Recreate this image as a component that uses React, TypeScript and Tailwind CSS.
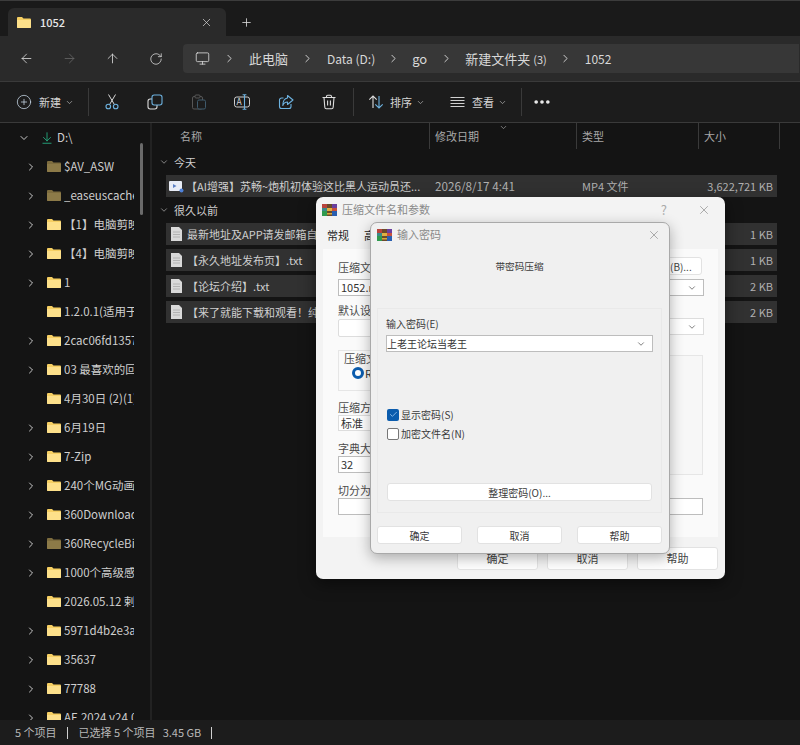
import React from "react";
import { ArrowLeft, ArrowRight, ArrowUp, RotateCw, Monitor, ChevronRight, ChevronDown, Plus, X, MoreHorizontal, Check, ArrowDownToLine, CirclePlus } from "lucide-react";

const F = "font-['Noto_Sans_CJK_SC','Noto_Sans',sans-serif]";

function Folder({ dim = false }: { dim?: boolean }) {
  return (
    <svg width="14" height="13" viewBox="0 0 14 13" className="shrink-0">
      <path d="M0 2 a1 1 0 0 1 1-1 h4 l1.5 1.5 H13 a1 1 0 0 1 1 1 V11 a1 1 0 0 1-1 1 H1 a1 1 0 0 1-1-1 Z" fill={dim ? "#7d6c3e" : "#f6cf62"} />
      <path d="M0 4 h14 V11 a1 1 0 0 1-1 1 H1 a1 1 0 0 1-1-1 Z" fill={dim ? "#8c7a48" : "#fde08a"} />
    </svg>
  );
}

function FileIcon() {
  return (
    <svg width="11" height="14" viewBox="0 0 11 14" className="shrink-0">
      <path d="M0 0 H8 L11 3 V14 H0 Z" fill="#d9d9d9" />
      <path d="M2 5 H9 M2 7.5 H9 M2 10 H9" stroke="#a8a8a8" strokeWidth="0.8" />
    </svg>
  );
}

function VideoIcon() {
  return (
    <svg width="15" height="13" viewBox="0 0 15 13" className="shrink-0">
      <rect x="0" y="1" width="13" height="10" rx="1" fill="#e8ecf6" />
      <path d="M4 4 L7.5 6 L4 8 Z" fill="#5b7fc4" />
      <circle cx="12.5" cy="10.5" r="2" fill="#4f82d9" />
    </svg>
  );
}

function RarIcon() {
  return (
    <svg width="15" height="14" viewBox="0 0 15 14" className="shrink-0">
      <rect x="0" y="1" width="15" height="12" fill="#6b4a2a" />
      <rect x="0" y="1" width="5" height="4" fill="#b8443c" />
      <rect x="10" y="1" width="5" height="4" fill="#6a3f9e" />
      <rect x="0" y="5" width="5" height="3" fill="#3b8a8a" />
      <rect x="10" y="5" width="5" height="3" fill="#c8503c" />
      <rect x="0" y="8" width="5" height="5" fill="#2f9a4e" />
      <rect x="10" y="8" width="5" height="5" fill="#2a5fb0" />
      <rect x="5" y="5" width="5" height="3" fill="#e0b040" />
      <rect x="5" y="10" width="5" height="1.5" fill="#d9a93a" />
    </svg>
  );
}

const Blue = "#6db2e0";

function ScissorsIcon() {
  return (
    <svg width="16" height="16" viewBox="0 0 16 16" fill="none" className="shrink-0">
      <path d="M4.5 0.5 L10.2 10.2 M11.5 0.5 L5.8 10.2" stroke="#d8d8d8" strokeWidth="1" />
      <circle cx="4.3" cy="12.5" r="2.3" stroke={Blue} strokeWidth="1.1" />
      <circle cx="11.7" cy="12.5" r="2.3" stroke={Blue} strokeWidth="1.1" />
    </svg>
  );
}
function CopyIcon() {
  return (
    <svg width="16" height="16" viewBox="0 0 16 16" fill="none" className="shrink-0">
      <rect x="1" y="5" width="9" height="10" rx="2.2" stroke="#dcdcdc" strokeWidth="1.1" />
      <rect x="5" y="1" width="10" height="10" rx="2.2" fill="#1c1c1c" stroke={Blue} strokeWidth="1.1" />
    </svg>
  );
}
function PasteIcon() {
  return (
    <svg width="16" height="16" viewBox="0 0 16 16" fill="none" className="shrink-0">
      <rect x="1.5" y="2.5" width="10" height="12.5" rx="1.5" stroke="#565656" />
      <rect x="4" y="1" width="5" height="3" rx="1" fill="#1c1c1c" stroke="#565656" />
      <rect x="6.5" y="6" width="8" height="9" rx="1.5" fill="#1c1c1c" stroke="#3f5a6c" />
    </svg>
  );
}
function RenameIcon() {
  return (
    <svg width="16" height="16" viewBox="0 0 16 16" fill="none" className="shrink-0">
      <rect x="0.5" y="3" width="15" height="10" rx="2.2" stroke="#cfcfcf" strokeWidth="1" />
      <text x="2.5" y="11" fontSize="8.5" fill="#d8d8d8">A</text>
      <path d="M10.5 0.8 V15.2 M8.6 0.8 H12.4 M8.6 15.2 H12.4" stroke={Blue} strokeWidth="1.1" />
    </svg>
  );
}
function ShareIcon() {
  return (
    <svg width="16" height="16" viewBox="0 0 16 16" fill="none" className="shrink-0">
      <path d="M13 10 V12.5 a2 2 0 0 1-2 2 H3.5 a2 2 0 0 1-2-2 V6 a2 2 0 0 1 2-2 H5.5" stroke={Blue} strokeWidth="1.1" />
      <path d="M9.5 1.5 L15 6 L9.5 10.5 V8 C7 8 5.5 9.5 4.8 11.5 C4.8 7.5 6.5 4.5 9.5 4 Z" fill="#1c1c1c" stroke={Blue} strokeWidth="1.1" strokeLinejoin="round" />
    </svg>
  );
}
function TrashIcon() {
  return (
    <svg width="16" height="16" viewBox="0 0 16 16" fill="none" className="shrink-0">
      <path d="M1.5 3.5 H14.5 M5.5 3.5 V2.5 a1.2 1.2 0 0 1 1.2-1.2 h2.6 a1.2 1.2 0 0 1 1.2 1.2 V3.5 M3 3.5 L3.8 13.2 a1.6 1.6 0 0 0 1.6 1.5 h5.2 a1.6 1.6 0 0 0 1.6-1.5 L13 3.5 M6.6 6.5 V11.5 M9.4 6.5 V11.5" stroke="#dddddd" strokeWidth="1.1" />
    </svg>
  );
}
function SortIcon() {
  return (
    <svg width="16" height="16" viewBox="0 0 16 16" fill="none" className="shrink-0">
      <path d="M5 14 V2 M1.3 5.7 L5 2 L8.7 5.7" stroke="#dcdcdc" strokeWidth="1.1" />
      <path d="M11 2 V14 M7.3 10.3 L11 14 L14.7 10.3" stroke={Blue} strokeWidth="1.1" />
    </svg>
  );
}
function ViewIcon() {
  return (
    <svg width="15" height="12" viewBox="0 0 15 12" fill="none" className="shrink-0">
      <path d="M0.5 1.5 H14.5 M0.5 4.5 H14.5 M0.5 7.5 H14.5 M0.5 10.5 H14.5" stroke="#d0d0d0" strokeWidth="1" />
    </svg>
  );
}

const tree: [string, boolean, boolean][] = [
  ["$AV_ASW", true, true],
  ["_easeuscache", true, true],
  ["【1】电脑剪映专业版", false, true],
  ["【4】电脑剪映专业版", false, true],
  ["1", false, true],
  ["1.2.0.1(适用于电脑", false, false],
  ["2cac06fd1357abcdef", false, true],
  ["03 最喜欢的回忆集合", false, true],
  ["4月30日 (2)(1)文件", false, false],
  ["6月19日", false, true],
  ["7-Zip", false, true],
  ["240个MG动画素材", false, true],
  ["360Downloads", false, true],
  ["360RecycleBin", true, true],
  ["1000个高级感素材", false, true],
  ["2026.05.12 剌激文件", false, false],
  ["5971d4b2e3a8bcdef", false, true],
  ["35637", false, true],
  ["77788", false, true],
  ["AE.2024 v24.0.0", false, true],
];

const oldFiles: [string, string][] = [
  ["最新地址及APP请发邮箱自动获取.txt", "1 KB"],
  ["【永久地址发布页】.txt", "1 KB"],
  ["【论坛介绍】.txt", "2 KB"],
  ["【来了就能下载和观看！纯净无广告】.txt", "2 KB"],
];

function Sep() {
  return <ChevronRight size={13} strokeWidth={1.8} className="text-[#d0d0d0] shrink-0" />;
}

function Btn({ children, className = "" }: { children: React.ReactNode; className?: string }) {
  return (
    <div className={`flex h-[18px] items-center justify-center rounded-[3px] border border-[#e2e2e2] bg-white text-[10px] text-[#3a3a3a] ${className}`}>
      {children}
    </div>
  );
}

function Select({ children, className = "" }: { children?: React.ReactNode; className?: string }) {
  return (
    <div className={`flex h-[17px] items-center justify-between border border-[#bdbdbd] bg-white pl-0 pr-[6px] text-[10px] text-[#333] ${className}`}>
      <span>{children}</span>
      <ChevronDown size={10} className="text-[#666]" />
    </div>
  );
}

function Label({ children }: { children: React.ReactNode }) {
  return <div className="text-[11px] leading-[15px] text-[#4a4a4a] whitespace-nowrap">{children}</div>;
}

export default function App() {
  return (
    <div className={`${F} relative flex h-[745px] w-[800px] flex-col overflow-hidden bg-[#141414] text-[#cfcfcf]`}>
      {/* Tab bar */}
      <div className="flex h-[36px] shrink-0 items-end border-t border-[#3c3c3c] bg-[#1a1a1a] pl-[8px]">
        <div className="flex h-[28px] w-[218px] items-center rounded-t-[6px] bg-[#2a2a2a] pl-[9px] pr-[12px]">
          <Folder />
          <span className="ml-[9px] text-[11px] font-medium text-[#e6e6e6]">1052</span>
          <X size={13} strokeWidth={1.3} className="ml-auto mr-[1px] text-[#d8d8d8]" />
        </div>
        <Plus size={13} strokeWidth={1.5} className="mb-[7px] ml-[14px] text-[#dddddd]" />
      </div>
      {/* Address row */}
      <div className="flex h-[45px] shrink-0 items-center bg-[#2a2a2a] pl-[19px]">
        <ArrowLeft size={15} strokeWidth={1.3} className="text-[#dcdcdc]" />
        <ArrowRight size={15} strokeWidth={1.3} className="ml-[28px] text-[#666]" />
        <ArrowUp size={15} strokeWidth={1.3} className="ml-[28px] text-[#dcdcdc]" />
        <RotateCw size={14} strokeWidth={1.3} className="ml-[29px] text-[#dcdcdc]" />
        <div className="ml-[20px] flex h-[29px] w-[616px] items-center gap-[13px] rounded-l-[4px] bg-[#373737] pl-[12px] text-[13px] text-[#d8d8d8] whitespace-nowrap">
          <Monitor size={15} strokeWidth={1.3} className="text-[#dcdcdc]" />
          <Sep />
          <span>此电脑</span>
          <Sep />
          <span className="text-[12px]">Data (D:)</span>
          <span className="ml-[-1px]"><Sep /></span>
          <span className="ml-[-1px]">go</span>
          <Sep />
          <span className="ml-[-1px]">新建文件夹 <span className="text-[11px]">(3)</span></span>
          <span className="ml-[-1px]"><Sep /></span>
          <span className="text-[12px]">1052</span>
        </div>
      </div>
      {/* Toolbar */}
      <div className="flex h-[42px] shrink-0 items-center border-y border-[#3a3a3a] bg-[#1c1c1c] pl-[16px] text-[11px] text-[#d5d5d5]">
        <CirclePlus size={16} strokeWidth={1.1} className="text-[#cfe0f0]" />
        <span className="ml-[7px]">新建</span>
        <ChevronDown size={9} className="ml-[4px] text-[#aaa]" />
        <div className="ml-[14px] h-[28px] w-px bg-[#3a3a3a]" />
        <span className="ml-[15px]"><ScissorsIcon /></span>
        <span className="ml-[27px]"><CopyIcon /></span>
        <span className="ml-[28px]"><PasteIcon /></span>
        <span className="ml-[27px]"><RenameIcon /></span>
        <span className="ml-[28px]"><ShareIcon /></span>
        <span className="ml-[27px]"><TrashIcon /></span>
        <div className="ml-[16px] h-[28px] w-px bg-[#3a3a3a]" />
        <span className="ml-[14px]"><SortIcon /></span>
        <span className="ml-[6px]">排序</span>
        <ChevronDown size={9} className="ml-[4px] text-[#aaa]" />
        <span className="ml-[25px]"><ViewIcon /></span>
        <span className="ml-[7px]">查看</span>
        <ChevronDown size={9} className="ml-[4px] text-[#aaa]" />
        <div className="ml-[14px] h-[28px] w-px bg-[#3a3a3a]" />
        <MoreHorizontal size={20} strokeWidth={2.4} className="ml-[10px] text-[#eeeeee]" />
      </div>
      {/* Main */}
      <div className="flex min-h-0 flex-1">
        <div className="relative w-[152px] shrink-0 overflow-hidden border-r-2 border-[#222]">
          <div className="flex h-[29px] items-center pl-[18px]">
            <ChevronDown size={12} strokeWidth={1.8} className="text-[#dcdcdc]" />
            <ArrowDownToLine size={14} strokeWidth={1.4} className="ml-[10px] text-[#27b98a]" />
            <span className="ml-[3px] text-[11.5px] text-[#d0d0d0]">D:\</span>
          </div>
          {tree.map(([name, dim, arrow]) => (
            <div key={name} className="flex h-[29px] items-center pl-[25px]">
              <span className="w-[22px] shrink-0">
                {arrow && <ChevronRight size={12} strokeWidth={1.8} className="text-[#dcdcdc]" />}
              </span>
              <Folder dim={dim} />
              <span className="ml-[3px] w-[70px] overflow-hidden whitespace-nowrap text-[11.5px] text-[#cfcfcf]">{name}</span>
            </div>
          ))}
          <div className="absolute left-[140px] top-[20px] h-[72px] w-[3px] rounded bg-[#6a6a6a]" />
        </div>
        <div className="min-w-0 flex-1">
          <div className="relative flex h-[26px] items-center text-[11px] text-[#a8a8a8]">
            <span className="ml-[28px] w-[249px]">名称</span>
            <span className="flex h-full w-[147px] items-center border-l border-[#3a3a3a] pl-[5px]">修改日期</span>
            <span className="flex h-full w-[122px] items-center border-l border-[#3a3a3a] pl-[5px]">类型</span>
            <span className="flex h-full w-[82px] items-center border-x border-[#3a3a3a] pl-[5px]">大小</span>
            <ChevronDown size={9} className="absolute left-[347px] top-0 text-[#999]" />
          </div>
          <div className="flex h-[26px] items-center pl-[7px] text-[11px] text-[#cfcfcf]">
            <ChevronDown size={10} className="text-[#999]" />
            <span className="ml-[5px]">今天</span>
          </div>
          <div className="ml-[14px] flex h-[22px] w-[611px] items-center bg-[#313131] text-[11px]">
            <span className="ml-[3px]"><VideoIcon /></span>
            <span className="ml-[2px] w-[249px] overflow-hidden whitespace-nowrap">【AI增强】苏畅~炮机初体验这比黑人运动员还...</span>
            <span className="w-[147px] text-[11.7px] text-[#b0b0b0]">2026/8/17 4:41</span>
            <span className="w-[122px] text-[#b0b0b0]">MP4 文件</span>
            <span className="flex-1 pr-[4px] text-right text-[#b0b0b0]">3,622,721 KB</span>
          </div>
          <div className="flex h-[26px] items-center pl-[7px] text-[11px] text-[#cfcfcf]">
            <ChevronDown size={10} className="text-[#999]" />
            <span className="ml-[5px]">很久以前</span>
          </div>
          {oldFiles.map(([n, s]) => (
            <div key={n} className="mb-[4px] ml-[14px] flex h-[22px] w-[611px] items-center bg-[#313131] text-[11px]">
              <span className="ml-[5px]"><FileIcon /></span>
              <span className="ml-[5px] w-[220px] overflow-hidden whitespace-nowrap">{n}</span>
              <span className="ml-auto pr-[4px] text-[#b0b0b0]">{s}</span>
            </div>
          ))}
        </div>
      </div>
      {/* Status */}
      <div className="flex h-[25px] shrink-0 items-center bg-[#1c1c1c] pl-[15px] text-[11px] text-[#b8b8b8]">
        <span>5 个项目</span>
        <span className="ml-[10px] h-[12px] w-px bg-[#cfcfcf]" />
        <span className="ml-[11px]">已选择 5 个项目</span>
        <span className="ml-[7px]">3.45 GB</span>
        <span className="ml-[10px] h-[12px] w-px bg-[#cfcfcf]" />
      </div>

      {/* Back dialog */}
      <div className="absolute left-[316px] top-[197px] flex h-[382px] w-[409px] flex-col rounded-[7px] bg-[#f3f3f3] shadow-[0_4px_16px_rgba(0,0,0,0.5)]">
        <div className="flex h-[25px] shrink-0 items-center pl-[6px] pr-[14px]">
          <RarIcon />
          <span className="ml-[5px] text-[11px] text-[#8a8a8a]">压缩文件名和参数</span>
          <span className="ml-auto text-[13px] text-[#aaa]">?</span>
          <X size={14} strokeWidth={1} className="ml-[30px] text-[#777]" />
        </div>
        <div className="flex h-[27px] shrink-0 items-center pl-[11px] text-[11px] text-[#222]">
          <span>常规</span>
          <span className="ml-[15px]">高级</span>
        </div>
        <div className="mx-[7px] flex h-[288px] shrink-0 flex-col bg-[#fafafa] pl-[15px] pt-[11px]">
          <Label>压缩文件名(A)</Label>
          <div className="mt-[4px] flex h-[17px] w-[60px] items-center overflow-hidden border border-[#bdbdbd] bg-white pl-[2px] text-[11px] whitespace-nowrap text-[#333]">1052.rar</div>
          <div className="mt-[7px]"><Label>默认设置</Label></div>
          <div className="mt-[1px] h-[18px] w-[60px] rounded-[2px] border border-[#ddd] bg-white" />
          <div className="mt-[13px] h-[41px] w-[60px] border border-[#e6e6e6] pl-[5px]">
            <Label>压缩文件格式</Label>
            <div className="mt-[1px] flex items-center gap-[1px]">
              <span className="ml-[8px] h-[12px] w-[12px] rounded-full border-[3px] border-[#0b5cad] bg-white" />
              <span className="text-[11px] leading-[12px] text-[#333]">R</span>
            </div>
          </div>
          <div className="mt-[9px]"><Label>压缩方式</Label></div>
          <div className="flex h-[16px] w-[60px] items-center border border-[#ddd] bg-white pl-[2px] text-[11px] text-[#333]">标准</div>
          <div className="mt-[10px]"><Label>字典大小</Label></div>
          <div className="flex h-[17px] w-[60px] items-center border border-[#bdbdbd] bg-white pl-[2px] text-[11px] text-[#333]">32</div>
          <div className="mt-[10px]"><Label>切分为分卷</Label></div>
          <div className="h-[17px] w-[60px] border border-[#bdbdbd] bg-white" />
        </div>
        <div className="mr-[7px] mt-[10px] flex justify-end gap-[9px]">
          <Btn className="h-[23px] w-[81px] border-[#e4e4e4] bg-[#f2f2f2] text-[11px] text-[#444]">确定</Btn>
          <Btn className="h-[23px] w-[81px] border-[#e4e4e4] bg-[#f2f2f2] text-[11px] text-[#444]">取消</Btn>
          <Btn className="h-[23px] w-[81px] text-[11px] text-[#444]">帮助</Btn>
        </div>
        {/* right side controls visible behind front dialog */}
        <div className="absolute left-[353px] top-[60px] flex h-[18px] w-[33px] items-center rounded-r-[3px] border border-[#e2e2e2] bg-white text-[10px] text-[#444]">(B)...</div>
        <Select className="absolute left-[353px] top-[82px] h-[16px] w-[35px]" />
        <Select className="absolute left-[353px] top-[121px] h-[16px] w-[35px] border-[#ddd]" />
        <div className="absolute left-[353px] top-[158px] h-[120px] w-[34px] border border-[#e6e6e6] bg-[#f7f7f7]" />
        <div className="absolute left-[353px] top-[301px] h-[17px] w-[34px] border border-[#bdbdbd] bg-white" />
      </div>

      {/* Front dialog */}
      <div className="absolute left-[370px] top-[222px] flex h-[332px] w-[300px] flex-col rounded-[7px] border border-[#a9a9a9] bg-[#f0f0f0] shadow-[0_4px_14px_rgba(0,0,0,0.3)]">
        <div className="flex h-[24px] shrink-0 items-center pb-[1px] pl-[6px] pr-[8px]">
          <RarIcon />
          <span className="ml-[5px] text-[11px] text-[#8a8a8a]">输入密码</span>
          <X size={14} strokeWidth={1} className="ml-auto text-[#777]" />
        </div>
        <div className="pt-[11px] text-center text-[9.6px] leading-[16px] text-[#3a3a3a]"><span className="ml-[-1px]">带密码压缩</span></div>
        <div className="ml-[6px] mr-[7px] mt-[34px] flex h-[205px] flex-col border border-[#e9e9e9] pl-[8px] pr-[8px] pt-[7px]">
          <div className="text-[10px] leading-[16px] text-[#3a3a3a]">输入密码(E)</div>
          <Select className="mt-[3px] w-[267px] border-[#aaa]">上老王论坛当老王</Select>
          <div className="ml-[1px] mt-[54px] flex h-[17px] items-center gap-[2px] text-[10px] text-[#3a3a3a]">
            <span className="flex h-[12px] w-[12px] items-center justify-center rounded-[2px] bg-[#0b5cad]">
              <Check size={9} strokeWidth={2} className="text-[#a8d0f5]" />
            </span>
            <span>显示密码(S)</span>
          </div>
          <div className="ml-[1px] mt-[2px] flex h-[17px] items-center gap-[2px] text-[10px] text-[#3a3a3a]">
            <span className="h-[12px] w-[12px] rounded-[2px] border border-[#777] bg-white" />
            <span>加密文件名(N)</span>
          </div>
          <Btn className="ml-[1px] mt-[41px] w-[265px]">整理密码(O)...</Btn>
        </div>
        <div className="ml-[6px] mr-[7px] mt-[13px] flex justify-between">
          <Btn className="w-[85px]">确定</Btn>
          <Btn className="w-[85px]">取消</Btn>
          <Btn className="w-[85px]">帮助</Btn>
        </div>
      </div>
    </div>
  );
}
